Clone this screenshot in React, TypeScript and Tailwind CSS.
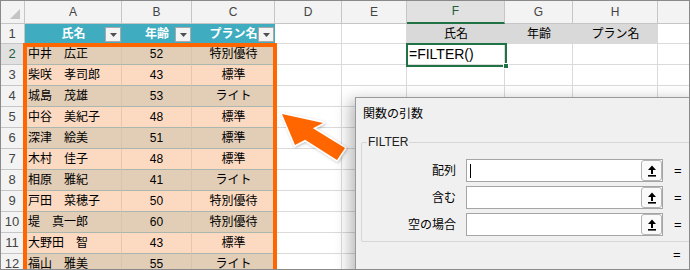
import React from "react";

type Row = { no: number; name: string; age: number; plan: string };

const rows: Row[] = [
  { no: 2, name: "中井　広正", age: 52, plan: "特別優待" },
  { no: 3, name: "柴咲　孝司郎", age: 43, plan: "標準" },
  { no: 4, name: "城島　茂雄", age: 53, plan: "ライト" },
  { no: 5, name: "中谷　美紀子", age: 48, plan: "標準" },
  { no: 6, name: "深津　絵美", age: 51, plan: "標準" },
  { no: 7, name: "木村　佳子", age: 48, plan: "標準" },
  { no: 8, name: "相原　雅紀", age: 41, plan: "ライト" },
  { no: 9, name: "戸田　菜穂子", age: 50, plan: "特別優待" },
  { no: 10, name: "堤　真一郎", age: 60, plan: "特別優待" },
  { no: 11, name: "大野田　智", age: 43, plan: "標準" },
  { no: 12, name: "福山　雅美", age: 55, plan: "ライト" },
];

const letters = ["A", "B", "C", "D", "E", "F", "G", "H", ""];

function FilterButton() {
  return (
    <span className="absolute right-[1px] top-[3px] flex h-[15px] w-[16px] items-center justify-center border border-[#a9a9a9] bg-[#f4f4f4]">
      <svg width="7" height="4" viewBox="0 0 7 4">
        <path d="M0 0h7L3.5 4z" fill="#505050" />
      </svg>
    </span>
  );
}

function UpButton() {
  return (
    <span className="absolute right-0 top-0 flex h-full w-[21px] items-center justify-center rounded-[3px] border border-[#b4b4b4] bg-[#fafafa]">
      <svg width="10" height="12" viewBox="0 0 10 12">
        <path d="M5 0.5L1 5h3v4h2V5h3z" fill="#000" />
        <rect x="1" y="10" width="8" height="1.6" fill="#000" />
      </svg>
    </span>
  );
}

function ArgRow({ label, caret }: { label: string; caret?: boolean }) {
  return (
    <div className="flex h-[23px] items-center">
      <span className="w-[94px] text-right">{label}</span>
      <div className="relative ml-[10px] flex h-[23px] w-[197px] items-center border border-[#a5a5a5] bg-white">
        {caret && <span className="ml-[3px] h-[14px] w-px bg-black" />}
        <UpButton />
      </div>
      <span className="ml-[11px] text-[13px]">=</span>
    </div>
  );
}

export default function App() {
  const gridLine = "border-r border-b border-[#dadada]";
  return (
    <div className="relative h-[270px] w-[690px] overflow-hidden bg-white font-['Liberation_Sans','Noto_Sans_CJK_JP',sans-serif] text-[12px] text-black">
      <div className="grid grid-cols-[25px_97px_70px_83px_67px_65px_98px_68px_85px_32px] grid-rows-[24px_20px_repeat(11,21px)]">
        {/* column headers */}
        <div className="relative border-r border-b border-[#c6c6c6] bg-[#f3f3f3]">
          <svg className="absolute right-[4px] bottom-[4px]" width="10" height="10" viewBox="0 0 10 10">
            <path d="M10 0V10H0z" fill="#c4c4c4" />
          </svg>
        </div>
        {letters.map((l, i) =>
          l === "F" ? (
            <div
              key={i}
              className="flex items-center justify-center border-r border-b-2 border-r-[#c6c6c6] border-b-[#217346] bg-[#e1e1e1] text-[12px] text-[#215f3c]"
            >
              {l}
            </div>
          ) : (
            <div
              key={i}
              className="flex items-center justify-center border-r border-b border-[#c6c6c6] bg-[#f3f3f3] text-[12px] text-[#444]"
            >
              {l}
            </div>
          )
        )}

        {/* row 1 */}
        <div className="flex items-center justify-center border-r border-b border-[#c6c6c6] bg-[#f3f3f3] text-[13px] text-[#444]">
          1
        </div>
        <div className="relative flex items-center justify-center bg-[#3facbf] font-bold text-white">
          氏名
          <FilterButton />
        </div>
        <div className="relative flex items-center justify-center bg-[#3facbf] font-bold text-white">
          年齢
          <FilterButton />
        </div>
        <div className="relative flex items-center justify-center bg-[#3facbf] font-bold text-white">
          プラン名
          <FilterButton />
        </div>
        <div className={gridLine} />
        <div className={gridLine} />
        <div className="flex items-center justify-center bg-[#d9d9d9]">氏名</div>
        <div className="flex items-center justify-center bg-[#d9d9d9]">年齢</div>
        <div className="flex items-center justify-center bg-[#d9d9d9]">プラン名</div>
        <div className={gridLine} />

        {/* data rows */}
        {rows.map((r) => {
          const even = r.no % 2 === 0;
          const fill = even ? "bg-[#e2cdb6]" : "bg-[#fcdac2]";
          const vline = even ? "border-r-[#d9c3aa]" : "border-r-[#e9c6aa]";
          return (
            <React.Fragment key={r.no}>
              <div
                className={
                  r.no === 2
                    ? "flex items-center justify-center border-r border-b border-[#c6c6c6] bg-[#e1e1e1] text-[13px] text-[#215f3c]"
                    : "flex items-center justify-center border-r border-b border-[#c6c6c6] bg-[#f3f3f3] text-[13px] text-[#444]"
                }
              >
                {r.no}
              </div>
              <div className={`flex items-center border-r border-b border-b-[#a9b7ae] pl-[3px] ${vline} ${fill}`}>
                {r.name}
              </div>
              <div className={`flex items-center justify-center border-r border-b border-b-[#a9b7ae] ${vline} ${fill}`}>
                {r.age}
              </div>
              <div className={`flex items-center justify-center border-b border-b-[#a9b7ae] ${fill}`}>{r.plan}</div>
              <div className={gridLine} />
              <div className={gridLine} />
              <div className={`${gridLine} flex items-center pl-[2px] text-[14px]`}>
                {r.no === 2 ? "=FILTER()" : ""}
              </div>
              <div className={gridLine} />
              <div className={gridLine} />
              <div className={gridLine} />
            </React.Fragment>
          );
        })}
      </div>

      {/* highlight around A2:C12 */}
      <div className="pointer-events-none absolute left-[23px] top-[43px] h-[250px] w-[254px] border-4 border-[#ff6600]" />

      {/* active cell F2 */}
      <div className="pointer-events-none absolute left-[406px] top-[43px] h-[24px] w-[101px] border-2 border-[#217346]">
        <span className="absolute -right-[4px] -bottom-[4px] h-[6px] w-[6px] border border-white bg-[#217346]" />
      </div>

      {/* arrow */}
      <svg className="pointer-events-none absolute left-[270px] top-[100px]" width="90" height="70" viewBox="270 100 90 70">
        <defs>
          <filter id="sh" x="-20%" y="-20%" width="140%" height="140%">
            <feDropShadow dx="1" dy="1" stdDeviation="1.5" floodColor="#000" floodOpacity="0.25" />
          </filter>
        </defs>
        <polygon
          points="282,114 323,123 312.9,128.2 345,148 337,160 305.1,139.8 295,145"
          fill="#ff6600"
          stroke="#fff"
          strokeWidth="3"
          strokeLinejoin="round"
          paintOrder="stroke"
          filter="url(#sh)"
        />
      </svg>

      {/* function arguments dialog */}
      <div className="absolute left-[355px] top-[97px] h-[190px] w-[345px] border border-[#9a9a9a] bg-[#f0f0f0] shadow-[-5px_3px_14px_rgba(0,0,0,0.28)]">
        <div className="pl-[7px] pt-[8px] leading-[16px]">関数の引数</div>
        <div className="relative ml-[5px] mt-[20px] h-[100px] w-[400px] rounded-[2px] border border-[#d6d6d6]">
          <span className="absolute -top-[9px] left-[5px] bg-[#f0f0f0] px-[1px] leading-[16px] text-[#222]">FILTER</span>
          <div className="flex flex-col gap-[4px] pt-[16px]">
            <ArgRow label="配列" caret />
            <ArgRow label="含む" />
            <ArgRow label="空の場合" />
          </div>
        </div>
        <div className="ml-[317px] mt-[5px] text-[13px] leading-[16px]">=</div>
      </div>

      {/* window frame */}
      <div className="pointer-events-none absolute inset-0 border border-[#8a8a8a]" />
    </div>
  );
}
